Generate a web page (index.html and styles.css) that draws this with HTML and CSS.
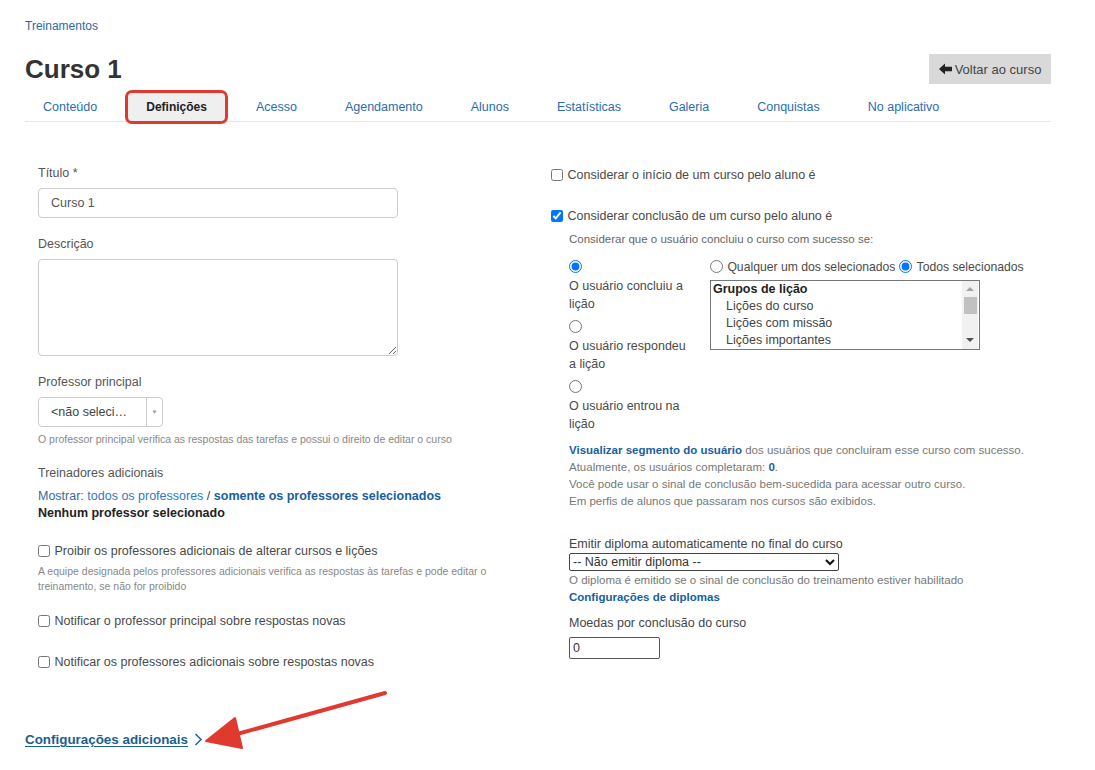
FILE: index.html
```html
<!DOCTYPE html>
<html lang="pt-BR">
<head>
    <meta charset="UTF-8">
    <meta name="viewport" content="width=device-width, initial-scale=1.0">
    <title>Curso 1 - Definições</title>
    <link rel="stylesheet" href="styles.css">
</head>
<body>
    <div class="page">
        <div class="breadcrumb"><a href="#">Treinamentos</a></div>

        <div class="title-row">
            <h1>Curso 1</h1>
            <button type="button" class="back-btn">
                <svg width="13" height="12" viewBox="0 0 13 12"><path d="M0 6 L6 0.5 L6 3.8 L13 3.8 L13 8.2 L6 8.2 L6 11.5 Z" fill="#222"/></svg>
                Voltar ao curso
            </button>
        </div>

        <ul class="tabs">
            <li><a href="#">Conteúdo</a></li>
            <li class="active"><a href="#">Definições</a></li>
            <li><a href="#">Acesso</a></li>
            <li><a href="#">Agendamento</a></li>
            <li><a href="#">Alunos</a></li>
            <li><a href="#">Estatísticas</a></li>
            <li><a href="#">Galeria</a></li>
            <li><a href="#">Conquistas</a></li>
            <li><a href="#">No aplicativo</a></li>
        </ul>

        <div class="content">
            <div class="col-left">
                <label class="field-label" for="titulo">Título *</label>
                <input type="text" id="titulo" class="text-input" value="Curso 1">

                <label class="field-label gap" for="descricao">Descrição</label>
                <textarea id="descricao" class="text-area"></textarea>

                <label class="field-label gap">Professor principal</label>
                <div class="select2">
                    <span class="select2-text">&lt;não seleci…</span>
                    <span class="select2-arrow">▼</span>
                </div>
                <p class="help">O professor principal verifica as respostas das tarefas e possui o direito de editar o curso</p>

                <div class="field-label gap">Treinadores adicionais</div>
                <div class="show-line">
                    <span class="show-label">Mostrar:</span>
                    <a href="#" class="plain-link">todos os professores</a> /
                    <a href="#" class="strong-link">somente os professores selecionados</a>
                </div>
                <div class="none-selected">Nenhum professor selecionado</div>

                <label class="check first"><input type="checkbox"> Proibir os professores adicionais de alterar cursos e lições</label>
                <p class="help two-line">A equipe designada pelos professores adicionais verifica as respostas às tarefas e pode editar o treinamento, se não for proibido</p>

                <label class="check notify1"><input type="checkbox"> Notificar o professor principal sobre respostas novas</label>
                <label class="check notify2"><input type="checkbox"> Notificar os professores adicionais sobre respostas novas</label>
            </div>

            <div class="col-right">
                <label class="check"><input type="checkbox"> Considerar o início de um curso pelo aluno é</label>
                <label class="check second"><input type="checkbox" checked> Considerar conclusão de um curso pelo aluno é</label>

                <div class="sub">
                    <div class="sub-title">Considerar que o usuário concluiu o curso com sucesso se:</div>

                    <div class="cond-row">
                        <div class="cond-list">
                            <label class="cond"><input type="radio" name="cond" checked><span>O usuário concluiu a lição</span></label>
                            <label class="cond"><input type="radio" name="cond"><span>O usuário respondeu a lição</span></label>
                            <label class="cond"><input type="radio" name="cond"><span>O usuário entrou na lição</span></label>
                        </div>
                        <div class="groups">
                            <div class="mode">
                                <label><input type="radio" name="mode"> Qualquer um dos selecionados</label>
                                <label><input type="radio" name="mode" checked> Todos selecionados</label>
                            </div>
                            <div class="listbox">
                                <div class="list-items">
                                    <div class="group-head">Grupos de lição</div>
                                    <div class="item">Lições do curso</div>
                                    <div class="item">Lições com missão</div>
                                    <div class="item">Lições importantes</div>
                                </div>
                                <div class="scrollbar">
                                    <span class="sb-up"></span>
                                    <span class="sb-thumb"></span>
                                    <span class="sb-fill"></span>
                                    <span class="sb-down"></span>
                                </div>
                            </div>
                        </div>
                    </div>

                    <div class="info">
                        <div><a href="#" class="strong-link">Visualizar segmento do usuário</a> dos usuários que concluiram esse curso com sucesso.</div>
                        <div>Atualmente, os usuários completaram: <a href="#" class="strong-link">0</a>.</div>
                        <div>Você pode usar o sinal de conclusão bem-sucedida para acessar outro curso.</div>
                        <div>Em perfis de alunos que passaram nos cursos são exibidos.</div>
                    </div>

                    <div class="diploma-label">Emitir diploma automaticamente no final do curso</div>
                    <div class="native-select">
                        <span>-- Não emitir diploma --</span>
                        <svg width="10" height="7" viewBox="0 0 10 7"><path d="M1 1 L5 5 L9 1" fill="none" stroke="#111" stroke-width="2"/></svg>
                    </div>
                    <div class="info-small">O diploma é emitido se o sinal de conclusão do treinamento estiver habilitado</div>
                    <a href="#" class="strong-link diploma-link">Configurações de diplomas</a>

                    <label class="diploma-label coins" for="moedas">Moedas por conclusão do curso</label>
                    <input type="text" id="moedas" class="coins-input" value="0">
                </div>
            </div>
        </div>

        <a href="#" class="more-link">Configurações adicionais <svg width="9" height="13" viewBox="0 0 9 13"><path d="M1.5 1 L7 6.5 L1.5 12" fill="none" stroke="#1d6aa5" stroke-width="1.6"/></svg></a>
    </div>

    <!-- annotation arrow -->
    <svg class="annotation" width="1095" height="770" viewBox="0 0 1095 770">
        <path d="M385 693 L230 736" stroke="#e03a2f" stroke-width="4" stroke-linecap="round"/>
        <path d="M206 741 L235 718 L242 748 Z" fill="#e03a2f" stroke="#e03a2f" stroke-width="2" stroke-linejoin="round"/>
    </svg>
</body>
</html>
```

FILE: styles.css
```css
body {
    margin: 0;
    font-family: "Liberation Sans", Arial, sans-serif;
    color: #444;
    background: #fff;
}
a {
    text-decoration: none;
}
.page {
    width: 1026px;
    margin-left: 25px;
    padding-top: 18px;
}
.breadcrumb {
    font-size: 12px;
    line-height: 16px;
}
.breadcrumb a {
    color: #2a6aa8;
}
.title-row {
    display: flex;
    justify-content: space-between;
    align-items: center;
    margin-top: 20px;
    height: 30px;
}
h1 {
    margin: 0;
    font-size: 26px;
    font-weight: bold;
    color: #333;
}
.back-btn {
    background-color: #d9d9d9;
    border: 0;
    width: 122px;
    height: 30px;
    font-family: inherit;
    font-size: 13px;
    color: #444;
    display: flex;
    align-items: center;
    justify-content: center;
    gap: 3px;
    padding: 0;
}
.tabs {
    list-style: none;
    margin: 9px 0 0;
    padding: 0 0 0 1px;
    display: flex;
    gap: 14px;
    border-bottom: 1px solid #e6e6e6;
}
.tabs li a {
    display: block;
    padding: 0 17px;
    height: 28px;
    line-height: 28px;
    font-size: 12.5px;
    color: #2a6db0;
}
.tabs li.active a {
    background-color: #efefef;
    color: #222;
    font-weight: bold;
    font-size: 12px;
    padding: 0 18px;
    border-radius: 4px;
    outline: 3px solid #e0392f;
    outline-offset: 0;
}
.content {
    display: grid;
    grid-template-columns: 500px 1fr;
    column-gap: 13px;
    padding: 42px 13px 0;
}
.field-label {
    display: block;
    font-size: 12.5px;
    line-height: 18px;
    color: #555;
    margin-bottom: 6px;
}
.field-label.gap {
    margin-top: 17px;
}
.text-input {
    display: block;
    box-sizing: border-box;
    width: 360px;
    height: 30px;
    border: 1px solid #ccc;
    border-radius: 4px;
    padding: 0 12px;
    font-family: inherit;
    font-size: 12.5px;
    color: #555;
}
.text-area {
    display: block;
    box-sizing: border-box;
    width: 360px;
    height: 97px;
    border: 1px solid #ccc;
    border-radius: 4px;
    margin: 0;
}
.select2 {
    box-sizing: border-box;
    width: 125px;
    height: 30px;
    border: 1px solid #ccc;
    border-radius: 4px;
    display: flex;
    align-items: stretch;
}
.select2-text {
    flex: 1;
    padding-left: 12px;
    line-height: 28px;
    font-size: 12.5px;
    color: #444;
}
.select2-arrow {
    width: 15px;
    border-left: 1px solid #ccc;
    font-size: 6px;
    color: #999;
    display: flex;
    align-items: center;
    justify-content: center;
}
.help {
    margin: 5px 0 0;
    font-size: 10.5px;
    line-height: 15px;
    color: #888;
}
.help.two-line {
    margin-top: 4px;
    width: 470px;
}
.show-line {
    margin-top: 4px;
    font-size: 12.5px;
    line-height: 17px;
}
.show-label {
    color: #3a6a96;
}
.plain-link {
    color: #2f7bbf;
}
.strong-link {
    color: #17609f;
    font-weight: bold;
}
.none-selected {
    font-size: 12.5px;
    line-height: 17px;
    font-weight: bold;
    color: #222;
}
.check {
    display: block;
    font-size: 12.5px;
    line-height: 18px;
    color: #4a4a4a;
}
.check input {
    margin: 0 1px 0 0;
    width: 12px;
    height: 12px;
    vertical-align: -2px;
}
.check.first {
    margin-top: 20px;
}
.check.notify1 {
    margin-top: 18px;
}
.check.notify2 {
    margin-top: 23px;
}
.col-right {
    padding-top: 2px;
}
.check.second {
    margin-top: 23px;
}
.sub {
    padding-left: 18px;
}
.sub-title {
    margin-top: 6px;
    font-size: 11.5px;
    line-height: 16px;
    color: #666;
}
.cond-row {
    display: flex;
    margin-top: 11px;
}
.cond-list {
    width: 141px;
    display: flex;
    flex-direction: column;
    gap: 5px;
}
.cond {
    display: flex;
    flex-direction: column;
    align-items: flex-start;
    font-size: 12.5px;
    line-height: 18px;
    color: #4a4a4a;
    width: 125px;
}
.cond input {
    margin: 2px 0 4px;
    width: 13px;
    height: 13px;
}
.groups {
    display: flex;
    flex-direction: column;
}
.mode {
    display: flex;
    gap: 4px;
    font-size: 12.2px;
    line-height: 18px;
    color: #4a4a4a;
}
.mode input {
    margin: 0 1px 0 0;
    width: 13px;
    height: 13px;
    vertical-align: -2px;
}
.listbox {
    box-sizing: border-box;
    width: 270px;
    height: 70px;
    border: 1px solid #777;
    display: flex;
    margin-top: 4px;
}
.list-items {
    flex: 1;
    font-size: 12.5px;
    line-height: 17px;
    color: #444;
}
.group-head {
    font-weight: bold;
    color: #222;
    padding-left: 2px;
}
.item {
    padding-left: 15px;
}
.scrollbar {
    width: 16px;
    margin-right: 1px;
    background-color: #f1f1f1;
    display: flex;
    flex-direction: column;
    align-items: center;
}
.sb-up, .sb-down {
    width: 0;
    height: 0;
    border-left: 4px solid transparent;
    border-right: 4px solid transparent;
}
.sb-up {
    margin-top: 6px;
    border-bottom: 4px solid #a3a3a3;
}
.sb-thumb {
    margin-top: 6px;
    width: 13px;
    height: 17px;
    background-color: #c1c1c1;
}
.sb-fill {
    flex: 1;
}
.sb-down {
    margin-bottom: 7px;
    border-top: 4px solid #505050;
}
.info {
    margin-top: 9px;
    font-size: 11.5px;
    line-height: 17px;
    color: #777;
}
.diploma-label {
    display: block;
    margin-top: 25px;
    font-size: 12.5px;
    line-height: 18px;
    color: #444;
}
.native-select {
    box-sizing: border-box;
    width: 270px;
    height: 18px;
    border: 1px solid #444;
    border-radius: 2px;
    padding: 0 3px;
    display: flex;
    justify-content: space-between;
    align-items: center;
    font-size: 12.5px;
    color: #333;
}
.info-small {
    margin-top: 1px;
    font-size: 11.5px;
    line-height: 16px;
    color: #777;
}
.diploma-link {
    display: block;
    font-size: 11.5px;
    line-height: 18px;
}
.diploma-label.coins {
    margin-top: 8px;
    margin-bottom: 5px;
}
.coins-input {
    box-sizing: border-box;
    width: 91px;
    height: 22px;
    border: 1px solid #555;
    border-radius: 2px;
    padding: 0 3px;
    font-family: inherit;
    font-size: 12.5px;
    color: #333;
}
.more-link {
    display: inline-flex;
    align-items: center;
    gap: 6px;
    margin-top: 61px;
    font-size: 13.4px;
    font-weight: bold;
    color: #1a5f91;
    text-decoration: underline;
    text-underline-offset: 2px;
}
.annotation {
    position: absolute;
    left: 0;
    top: 0;
    pointer-events: none;
}
```
